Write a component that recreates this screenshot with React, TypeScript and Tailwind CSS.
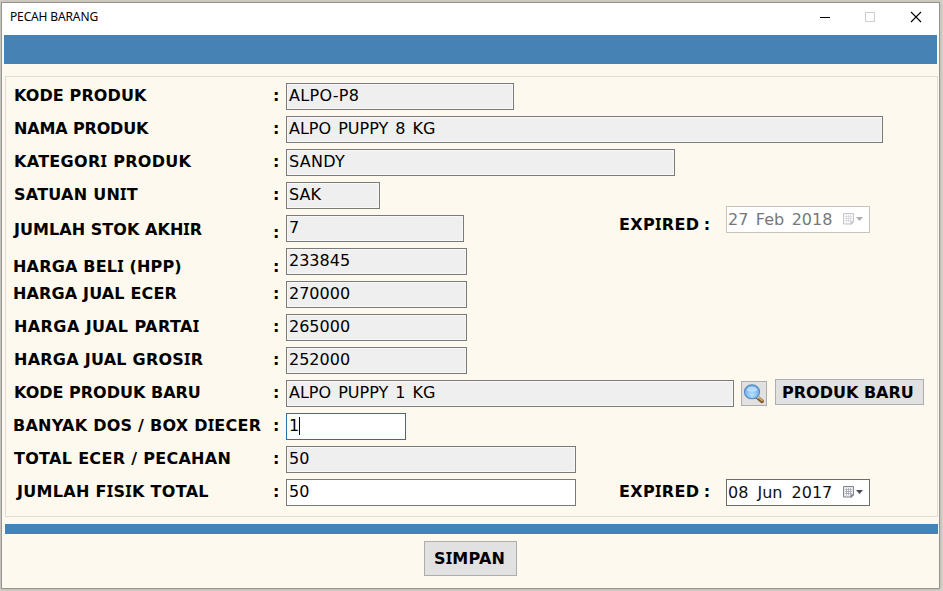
type Row = {
  label: string;
  value: string;
  width: string;
  pad?: string;
  labelTop?: string;
  colonTop?: string;
  tracking?: string;
  valueTracking?: string;
  editable?: boolean;
  focused?: boolean;
};

const rows: Row[] = [
  { label: "KODE PRODUK", value: "ALPO-P8", width: "w-[228px]", tracking: "tracking-[0.1px]", valueTracking: "tracking-[0.3px]" },
  { label: "NAMA PRODUK", value: "ALPO PUPPY 8 KG", width: "w-[597px]", tracking: "tracking-[-0.15px]" },
  { label: "KATEGORI PRODUK", value: "SANDY", width: "w-[389px]", tracking: "tracking-[0.3px]", valueTracking: "tracking-[0.3px]" },
  { label: "SATUAN UNIT", value: "SAK", width: "w-[94px]", tracking: "tracking-[0.25px]" },
  { label: "JUMLAH STOK AKHIR", value: "7", width: "w-[178px]", pad: "pl-[8px]", labelTop: "pt-[5px]", colonTop: "pt-[8px]", tracking: "tracking-[0.05px]" },
  { label: "HARGA BELI (HPP)", value: "233845", width: "w-[181px]", labelTop: "pt-[9px]", colonTop: "pt-[9px]", pad: "pl-[7px]", tracking: "tracking-[0.18px]" },
  { label: "HARGA JUAL ECER", value: "270000", width: "w-[181px]", pad: "pl-[7px]", tracking: "tracking-[0.15px]" },
  { label: "HARGA JUAL PARTAI", value: "265000", width: "w-[181px]", tracking: "tracking-[0.42px]" },
  { label: "HARGA JUAL GROSIR", value: "252000", width: "w-[181px]", tracking: "tracking-[0.25px]" },
  { label: "KODE PRODUK BARU", value: "ALPO PUPPY 1 KG", width: "w-[448px]" },
  { label: "BANYAK DOS / BOX DIECER", value: "1", width: "w-[120px]", pad: "pl-[7px]", editable: true, focused: true, tracking: "tracking-[0.25px]" },
  { label: "TOTAL ECER / PECAHAN", value: "50", width: "w-[290px]", tracking: "tracking-[0.3px]" },
  { label: "JUMLAH FISIK TOTAL", value: "50", width: "w-[290px]", pad: "pl-[11px]", editable: true, tracking: "tracking-[0.3px]" },
];

function Bold({ text, className }: { text: string; className: string }) {
  return (
    <span className={`whitespace-pre font-['DejaVu_Sans',sans-serif] text-[16px] leading-[20px] font-bold ${className}`}>
      {text.split("I").map((part, i) => (
        <span key={i}>
          {i > 0 && <span className="font-['Noto_Sans',sans-serif] text-[16.5px] leading-[0]">I</span>}
          {part}
        </span>
      ))}
    </span>
  );
}

function CalendarIcon() {
  return (
    <svg width="22" height="15" viewBox="0 0 22 15" className="block">
      <path d="M1.5 1.5h10v8.5l-2 2h-8z" fill="#e7e7ee" stroke="#85858e" />
      <path d="M3 3h7v7h-7z" fill="#fff" />
      <path d="M3 4.5h7M3 6.5h7M3 8.5h7M4.5 3v7M6.5 3v7M8.5 3v7" stroke="#a4a4b2" strokeWidth=".8" />
      <path d="M9 12.5V10h2.5" fill="#8a8a94" stroke="#77777f" />
      <path d="M14 5h7l-3.5 4z" fill="#4a4a5c" />
    </svg>
  );
}

function DatePicker({ value, disabled }: { value: string; disabled?: boolean }) {
  return (
    <div className={`flex h-[27px] w-[144px] items-start border bg-white pl-[1px] ${disabled ? "border-[#c8c3bd] text-[#77777a]" : "border-[#6e6c68] text-[#111]"}`}>
      <span
        className={`mt-[3px] w-[114px] whitespace-pre font-['DejaVu_Sans',sans-serif] text-[16px] leading-[20px] ${disabled ? "[word-spacing:2.4px]" : "[word-spacing:4px]"}`}
      >
        {value}
      </span>
      <span className={`mt-[5px] ${disabled ? "opacity-45" : ""}`}>
        <CalendarIcon />
      </span>
    </div>
  );
}

function MagnifierIcon() {
  return (
    <svg width="24" height="23" viewBox="0 0 24 23">
      <defs>
        <radialGradient id="lens" cx=".5" cy=".7" r=".65">
          <stop offset="0" stopColor="#b9e2fb" />
          <stop offset=".55" stopColor="#86bff5" />
          <stop offset="1" stopColor="#68a5ea" />
        </radialGradient>
      </defs>
      <path d="M15.5 15.5l4.5 3.7" stroke="#7d5d30" strokeWidth="3.8" strokeLinecap="round" />
      <path d="M16.2 15l3.8 3.4" stroke="#d0a964" strokeWidth="1.7" strokeLinecap="round" />
      <path d="M14.3 13.8l2 2" stroke="#d9d9d9" strokeWidth="2.5" />
      <ellipse cx="10" cy="9.8" rx="7.6" ry="7" fill="url(#lens)" stroke="#5d88bb" strokeWidth="1.1" />
      <path d="M4.5 8.5a5.6 5 0 0 1 11 0q-5.5 2.5-11 0z" fill="#d9ecfd" opacity=".65" />
    </svg>
  );
}

function Expired({ value, disabled, top }: { value: string; disabled?: boolean; top: string }) {
  return (
    <div className={`ml-auto mr-[67px] flex shrink-0 ${top}`}>
      <Bold text="EXPIRED :" className={`${disabled ? "pt-[9px]" : "pt-[3px]"} w-[107px] tracking-[0.35px] [word-spacing:-1.5px]`} />
      <DatePicker value={value} disabled={disabled} />
    </div>
  );
}

export default function App() {
  return (
    <div className="h-[591px] w-[943px] overflow-hidden bg-[#d8d4cb] pl-px pt-[2px] text-black">
      <div className="flex h-[587px] w-[939px] flex-col border border-[#969590] bg-[#fef9ee] shadow-[0_0_4px_#8888]">
        <header className="flex h-[32px] shrink-0 items-start bg-white">
          <span className="ml-[8px] mt-[5px] whitespace-pre font-['Noto_Sans',sans-serif] text-[12px] leading-[18px] tracking-[-0.14px]">PECAH BARANG</span>
          <svg className="ml-auto mr-[16px] mt-[8px]" width="104" height="12" viewBox="0 0 104 12" fill="none">
            <path d="M1 6.5h10" stroke="#000" />
            <path d="M46.5 1.5h9v9h-9z" stroke="#ccc" />
            <path d="M92 1l10 10M102 1l-10 10" stroke="#000" strokeWidth="1.1" />
          </svg>
        </header>
        <div className="ml-[2px] h-[29px] w-[933px] shrink-0 bg-[#4682b4]" />
        <main className="ml-[3px] mt-[12px] flex h-[441px] w-[933px] shrink-0 flex-col gap-[6px] border border-[#e3dbd2] pt-[6px]">
          {rows.map((r, i) => (
            <div key={r.label} className="flex h-[27px] items-start">
              <Bold text={r.label} className={`w-[267px] shrink-0 ${r.pad ?? "pl-[8px]"} ${r.labelTop ?? "pt-[3px]"} ${r.tracking ?? ""}`} />
              <Bold text=":" className={`w-[13px] shrink-0 ${r.colonTop ?? "pt-[3px]"}`} />
              <div
                className={`flex h-[27px] shrink-0 items-start border pl-[2px] ${r.width} ${r.focused ? "border-[#2272ab]" : "border-[#7a7a7a]"} ${r.editable ? "bg-white" : "bg-[#efefef] shadow-[inset_0_0_0_1px_#f8f8f8]"}`}
              >
                <span className={`mt-[2px] whitespace-pre font-['DejaVu_Sans',sans-serif] text-[16px] leading-[20px] [word-spacing:2px] ${r.valueTracking ?? ""}`}>
                  {r.value}
                </span>
                {r.focused && <span className="mt-[3px] h-[18px] w-px bg-black" />}
              </div>
              {i === 4 && <Expired value="27 Feb 2018" disabled top="-mt-[9px]" />}
              {i === 9 && (
                <>
                  <button className="ml-[7px] mt-px flex h-[25px] w-[26px] shrink-0 items-center justify-center border border-[#adadad] bg-[#e1e1e1]">
                    <MagnifierIcon />
                  </button>
                  <button className="ml-[8px] -mt-px flex h-[26px] w-[149px] shrink-0 justify-start border border-[#adadad] bg-[#e1e1e1] pl-[6px]">
                    <Bold text="PRODUK BARU" className="pt-[3px]" />
                  </button>
                </>
              )}
              {i === 12 && <Expired value="08 Jun 2017" top="mt-0" />}
            </div>
          ))}
        </main>
        <div className="ml-[3px] mt-[7px] h-[10px] w-[933px] shrink-0 bg-[#4682b4]" />
        <footer className="flex pl-[422px] pt-[7px]">
          <button className="flex h-[35px] w-[93px] justify-start border border-[#adadad] bg-[#e1e1e1] pl-[9px]">
            <Bold text="SIMPAN" className="pt-[7px] tracking-[0.2px]" />
          </button>
        </footer>
      </div>
    </div>
  );
}
